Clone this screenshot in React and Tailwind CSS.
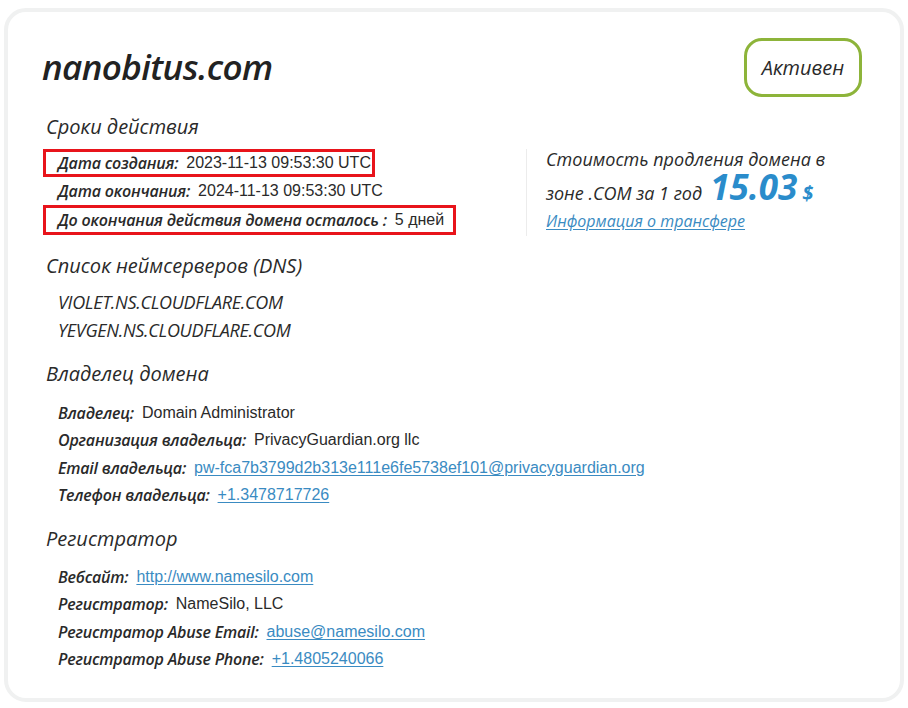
import React from 'react';

const display = { fontFamily: '"Open Sans", "Noto Sans", sans-serif' };
const plain = { fontFamily: '"Liberation Sans", Arial, sans-serif' };

const Row = ({ label, value, href, boxed, extraPr, tall, h = 'h-[28px]' }) => (
  <div
    className={`flex items-center w-fit border-[3px] pl-[12px] ${boxed ? 'border-[#e8141b]' : 'border-transparent'} ${extraPr ? 'pr-[9px]' : 'pr-[1px]'} ${tall ? 'h-[30px]' : h}`}
  >
    <span className="italic font-semibold text-[16px] text-[#2a2a2a] tracking-[-0.2px]" style={display}>
      {label}
    </span>
    {href ? (
      <a className="ml-[8px] text-[16px] text-[#3a8bc2] underline underline-offset-2" style={plain}>
        {value}
      </a>
    ) : (
      <span className="ml-[8px] text-[16px] text-[#2a2a2a]" style={plain}>
        {value}
      </span>
    )}
  </div>
);

const Heading = ({ children, className = '' }) => (
  <h3
    className={`h-[28px] flex items-center pl-[3px] italic text-[20px] font-medium text-[#2a2a2a] ${className}`}
    style={display}
  >
    {children}
  </h3>
);

export default function App() {
  return (
    <div className="min-h-[708px] bg-white pt-[8px] px-[4px]">
      <div className="w-[900px] h-[694px] border-[4px] border-[#f0f1f1] rounded-[22px] bg-white pl-[35px] pr-[38px]">
        {/* Header */}
        <div className="flex items-center justify-between pt-[26px]">
          <h1 className="ml-[-1px] italic font-semibold text-[35px] text-[#222] tracking-[-0.6px]" style={display}>
            nanobitus.com
          </h1>
          <div
            className="h-[59px] w-[118px] flex items-center justify-center border-[3px] border-[#8db43a] rounded-[18px] italic font-medium text-[20px] text-[#2a2a2a]"
            style={display}
          >
            Активен
          </div>
        </div>

        {/* Сроки действия */}
        <Heading className="mt-[16px]">Сроки действия</Heading>
        <div className="flex mt-[8px]">
          <div className="w-[483px] flex flex-col">
            <Row label="Дата создания:" value="2023-11-13 09:53:30 UTC" boxed />
            <Row label="Дата окончания:" value="2024-11-13 09:53:30 UTC" />
            <Row label="До окончания действия домена осталось :" value="5 дней" boxed extraPr tall />
          </div>
          <div className="border-l border-[#ececec] pl-[19px] h-[87px]">
            <div className="italic font-medium text-[18px] text-[#2a2a2a] leading-[24px] mt-[-2px]" style={display}>
              Стоимость продления домена в
            </div>
            <div className="flex items-baseline italic font-medium text-[18px] text-[#2a2a2a] h-[32px] leading-[32px]" style={display}>
              <span>зоне .COM за 1 год</span>
              <span className="ml-[8px] text-[35px] font-bold text-[#2a8ccb] leading-[32px]">15.03</span>
              <span className="ml-[5px] text-[20px] font-bold text-[#2a8ccb]">$</span>
            </div>
            <a className="block mt-[7px] italic font-medium text-[16px] text-[#3a8bc2] underline underline-offset-2 leading-[22px]" style={display}>
              Информация о трансфере
            </a>
          </div>
        </div>

        {/* DNS */}
        <Heading className="mt-[16px]">Список неймсерверов (DNS)</Heading>
        <div className="flex flex-col mt-[8px] pl-[15px]">
          {['VIOLET.NS.CLOUDFLARE.COM', 'YEVGEN.NS.CLOUDFLARE.COM'].map((ns) => (
            <div key={ns} className="h-[28px] flex items-center italic text-[18px] text-[#2a2a2a] tracking-[-0.3px]" style={display}>
              {ns}
            </div>
          ))}
        </div>

        {/* Владелец */}
        <Heading className="mt-[16px]">Владелец домена</Heading>
        <div className="flex flex-col mt-[11px]">
          <Row h="h-[27.5px]" label="Владелец:" value="Domain Administrator" />
          <Row h="h-[27.5px]" label="Организация владельца:" value="PrivacyGuardian.org llc" />
          <Row h="h-[27.5px]" label="Email владельца:" value="pw-fca7b3799d2b313e111e6fe5738ef101@privacyguardian.org" href />
          <Row h="h-[27.5px]" label="Телефон владельца:" value="+1.3478717726" href />
        </div>

        {/* Регистратор */}
        <Heading className="mt-[16px]">Регистратор</Heading>
        <div className="flex flex-col mt-[10px]">
          <Row h="h-[27.5px]" label="Вебсайт:" value="http://www.namesilo.com" href />
          <Row h="h-[27.5px]" label="Регистратор:" value="NameSilo, LLC" />
          <Row h="h-[27.5px]" label="Регистратор Abuse Email:" value="abuse@namesilo.com" href />
          <Row h="h-[27.5px]" label="Регистратор Abuse Phone:" value="+1.4805240066" href />
        </div>
      </div>
    </div>
  );
}
